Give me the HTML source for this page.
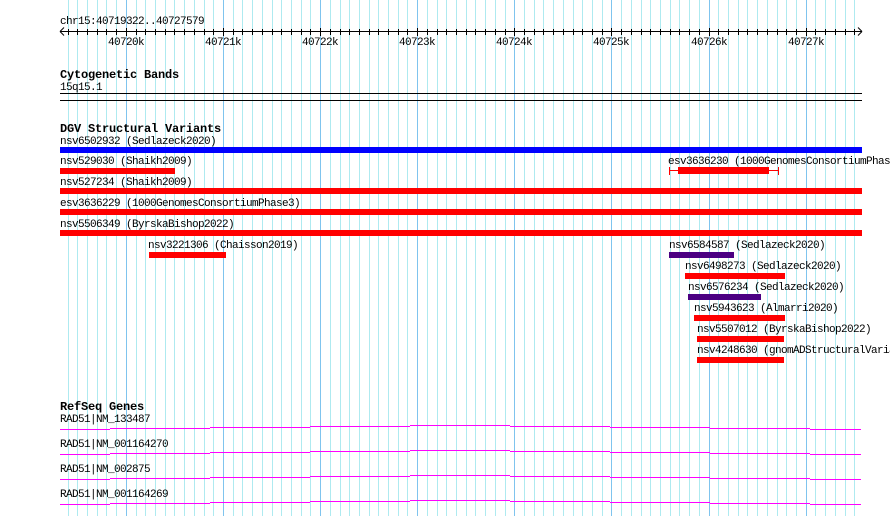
<!DOCTYPE html>
<html><head><meta charset="utf-8">
<style>
html,body{margin:0;padding:0;background:#fff;}
svg{display:block;}
text{font-family:"Liberation Mono",monospace;font-size:11px;letter-spacing:-0.6px;fill:#000;}
text.b{font-weight:bold;font-size:12px;letter-spacing:-0.2px;}
</style></head>
<body>
<svg width="890" height="516" xmlns="http://www.w3.org/2000/svg" shape-rendering="crispEdges">
<rect width="890" height="516" fill="#fff"/>
<path stroke="#aeeaf0" stroke-width="1" fill="none" d="M68.5 0V516M77.5 0V516M87.5 0V516M97.5 0V516M106.5 0V516M116.5 0V516M136.5 0V516M145.5 0V516M155.5 0V516M165.5 0V516M174.5 0V516M184.5 0V516M194.5 0V516M204.5 0V516M213.5 0V516M233.5 0V516M242.5 0V516M252.5 0V516M262.5 0V516M272.5 0V516M281.5 0V516M291.5 0V516M301.5 0V516M310.5 0V516M330.5 0V516M340.5 0V516M349.5 0V516M359.5 0V516M369.5 0V516M378.5 0V516M388.5 0V516M398.5 0V516M407.5 0V516M427.5 0V516M437.5 0V516M446.5 0V516M456.5 0V516M466.5 0V516M475.5 0V516M485.5 0V516M495.5 0V516M505.5 0V516M524.5 0V516M534.5 0V516M543.5 0V516M553.5 0V516M563.5 0V516M573.5 0V516M582.5 0V516M592.5 0V516M602.5 0V516M621.5 0V516M631.5 0V516M641.5 0V516M650.5 0V516M660.5 0V516M670.5 0V516M679.5 0V516M689.5 0V516M699.5 0V516M718.5 0V516M728.5 0V516M738.5 0V516M747.5 0V516M757.5 0V516M767.5 0V516M777.5 0V516M786.5 0V516M796.5 0V516M815.5 0V516M825.5 0V516M835.5 0V516M845.5 0V516M854.5 0V516"/>
<path stroke="#7fc4ee" stroke-width="1" fill="none" d="M126.5 0V516M223.5 0V516M320.5 0V516M417.5 0V516M514.5 0V516M611.5 0V516M709.5 0V516M806.5 0V516"/>

<!-- ruler -->
<text x="60" y="24">chr15:40719322..40727579</text>
<rect x="60" y="31" width="802" height="1" fill="#000"/>
<path stroke="#000" fill="none" d="M68.5 29V35M77.5 29V35M87.5 29V35M97.5 29V35M106.5 29V35M116.5 29V35M136.5 29V35M145.5 29V35M155.5 29V35M165.5 29V35M174.5 29V35M184.5 29V35M194.5 29V35M204.5 29V35M213.5 29V35M233.5 29V35M242.5 29V35M252.5 29V35M262.5 29V35M272.5 29V35M281.5 29V35M291.5 29V35M301.5 29V35M310.5 29V35M330.5 29V35M340.5 29V35M349.5 29V35M359.5 29V35M369.5 29V35M378.5 29V35M388.5 29V35M398.5 29V35M407.5 29V35M427.5 29V35M437.5 29V35M446.5 29V35M456.5 29V35M466.5 29V35M475.5 29V35M485.5 29V35M495.5 29V35M505.5 29V35M524.5 29V35M534.5 29V35M543.5 29V35M553.5 29V35M563.5 29V35M573.5 29V35M582.5 29V35M592.5 29V35M602.5 29V35M621.5 29V35M631.5 29V35M641.5 29V35M650.5 29V35M660.5 29V35M670.5 29V35M679.5 29V35M689.5 29V35M699.5 29V35M718.5 29V35M728.5 29V35M738.5 29V35M747.5 29V35M757.5 29V35M767.5 29V35M777.5 29V35M786.5 29V35M796.5 29V35M815.5 29V35M825.5 29V35M835.5 29V35M845.5 29V35M854.5 29V35M126.5 28V36M223.5 28V36M320.5 28V36M417.5 28V36M514.5 28V36M611.5 28V36M709.5 28V36M806.5 28V36"/>
<path d="M60 31.5 L64 27.5 M60 31.5 L64 35.5 M862 31.5 L858 27.5 M862 31.5 L858 35.5" stroke="#000" fill="none" shape-rendering="auto"/>
<g text-anchor="middle">
<text x="126" y="45">40720k</text>
<text x="223" y="45">40721k</text>
<text x="320" y="45">40722k</text>
<text x="417" y="45">40723k</text>
<text x="514" y="45">40724k</text>
<text x="611" y="45">40725k</text>
<text x="709" y="45">40726k</text>
<text x="806" y="45">40727k</text>
</g>

<!-- cytogenetic -->
<text class="b" x="60" y="78">Cytogenetic Bands</text>
<text x="60" y="90">15q15.1</text>
<rect x="60" y="93" width="802" height="1" fill="#000"/>
<rect x="60" y="100" width="802" height="1" fill="#000"/>

<!-- DGV -->
<text class="b" x="60" y="132">DGV Structural Variants</text>
<text x="60" y="144">nsv6502932 (Sedlazeck2020)</text>
<rect x="60" y="147" width="802" height="6" fill="#0000ff"/>

<text x="60" y="164">nsv529030 (Shaikh2009)</text>
<rect x="60" y="168" width="115" height="6" fill="#ff0000"/>
<text x="668" y="164">esv3636230 (1000GenomesConsortiumPhase3)</text>
<rect x="669" y="170" width="110" height="1" fill="#ff0000"/>
<rect x="669" y="167" width="1" height="8" fill="#ff0000"/>
<rect x="778" y="167" width="1" height="8" fill="#ff0000"/>
<rect x="678" y="167" width="91" height="7" fill="#ff0000"/>

<text x="60" y="185">nsv527234 (Shaikh2009)</text>
<rect x="60" y="188" width="802" height="6" fill="#ff0000"/>
<text x="60" y="206">esv3636229 (1000GenomesConsortiumPhase3)</text>
<rect x="60" y="209" width="802" height="6" fill="#ff0000"/>
<text x="60" y="227">nsv5506349 (ByrskaBishop2022)</text>
<rect x="60" y="230" width="802" height="6" fill="#ff0000"/>

<text x="148" y="248">nsv3221306 (Chaisson2019)</text>
<rect x="149" y="252" width="77" height="6" fill="#ff0000"/>
<text x="669" y="248">nsv6584587 (Sedlazeck2020)</text>
<rect x="669" y="252" width="65" height="6" fill="#4b0082"/>
<text x="685" y="269">nsv6498273 (Sedlazeck2020)</text>
<rect x="685" y="273" width="100" height="6" fill="#ff0000"/>
<text x="688" y="290">nsv6576234 (Sedlazeck2020)</text>
<rect x="688" y="294" width="73" height="6" fill="#4b0082"/>
<text x="694" y="311">nsv5943623 (Almarri2020)</text>
<rect x="694" y="315" width="91" height="6" fill="#ff0000"/>
<text x="697" y="332">nsv5507012 (ByrskaBishop2022)</text>
<rect x="697" y="336" width="87" height="6" fill="#ff0000"/>
<text x="697" y="353">nsv4248630 (gnomADStructuralVariants)</text>
<rect x="697" y="357" width="87" height="6" fill="#ff0000"/>

<!-- RefSeq -->
<text class="b" x="60" y="410">RefSeq Genes</text>
<g fill="#ff00ff">
<text x="60" y="422" style="fill:#000">RAD51|NM_133487</text>
<rect x="60" y="429" width="50" height="1"/><rect x="110" y="428" width="100" height="1"/><rect x="210" y="427" width="100" height="1"/><rect x="310" y="426" width="100" height="1"/><rect x="410" y="425" width="100" height="1"/><rect x="510" y="426" width="100" height="1"/><rect x="610" y="427" width="100" height="1"/><rect x="710" y="428" width="100" height="1"/><rect x="810" y="429" width="51" height="1"/>
<text x="60" y="447" style="fill:#000">RAD51|NM_001164270</text>
<rect x="60" y="454" width="50" height="1"/><rect x="110" y="453" width="100" height="1"/><rect x="210" y="452" width="100" height="1"/><rect x="310" y="451" width="100" height="1"/><rect x="410" y="450" width="100" height="1"/><rect x="510" y="451" width="100" height="1"/><rect x="610" y="452" width="100" height="1"/><rect x="710" y="453" width="100" height="1"/><rect x="810" y="454" width="51" height="1"/>
<text x="60" y="472" style="fill:#000">RAD51|NM_002875</text>
<rect x="60" y="479" width="50" height="1"/><rect x="110" y="478" width="100" height="1"/><rect x="210" y="477" width="100" height="1"/><rect x="310" y="476" width="100" height="1"/><rect x="410" y="475" width="100" height="1"/><rect x="510" y="476" width="100" height="1"/><rect x="610" y="477" width="100" height="1"/><rect x="710" y="478" width="100" height="1"/><rect x="810" y="479" width="51" height="1"/>
<text x="60" y="497" style="fill:#000">RAD51|NM_001164269</text>
<rect x="60" y="504" width="50" height="1"/><rect x="110" y="503" width="100" height="1"/><rect x="210" y="502" width="100" height="1"/><rect x="310" y="501" width="100" height="1"/><rect x="410" y="500" width="100" height="1"/><rect x="510" y="501" width="100" height="1"/><rect x="610" y="502" width="100" height="1"/><rect x="710" y="503" width="100" height="1"/><rect x="810" y="504" width="51" height="1"/>
</g>
</svg>
</body></html>
